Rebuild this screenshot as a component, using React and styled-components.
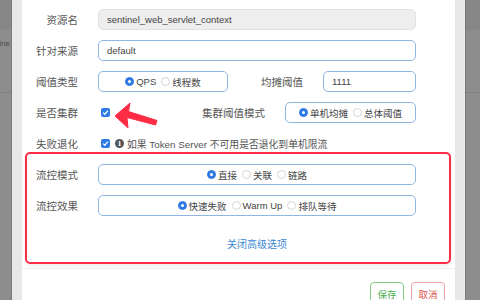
import React from 'react';
import styled, { createGlobalStyle } from 'styled-components';

const Global = createGlobalStyle`
  html, body {
    margin: 0;
    padding: 0;
    width: 480px;
    height: 300px;
    overflow: hidden;
    background: #8d8d8d;
  }
  * { box-sizing: border-box; }
`;

const Page = styled.div`
  display: flex;
  width: 480px;
  height: 300px;
  font-family: "Liberation Sans", "Noto Sans CJK SC", sans-serif;
`;

const Backdrop = styled.div`
  width: ${(p) => p.$w}px;
  flex-shrink: 0;
  height: 100%;
  background: #8d8d8d;
  display: flex;
  flex-direction: column;
  overflow: hidden;
  border-${(p) => p.$side}: 1px solid #7a7a7a;
`;

const BackdropHead = styled.div`
  height: 30px;
  background: #878787;
`;

const BackdropRow = styled.div`
  height: 63px;
  border-bottom: 1px solid #808080;
  font-size: 8px;
  color: #4a4a4a;
  padding-top: 9px;
  white-space: nowrap;
  text-indent: ${(p) => p.$indent}px;
`;

const Frame = styled.div`
  flex: 1;
  display: flex;
  background: #e8e8e8;
  padding: 0 ${(p) => p.$right}px 0 10px;
`;

const Modal = styled.div`
  position: relative;
  flex: 1;
  background: #fff;
  display: flex;
  flex-direction: column;
`;

const Body = styled.div`
  padding: 9px 39px 0 0;
  display: flex;
  flex-direction: column;
  gap: 10px;
`;

const Row = styled.div`
  display: flex;
  align-items: center;
  height: 21px;
`;

const Label = styled.div`
  width: ${(p) => p.$w || 56}px;
  flex-shrink: 0;
  text-align: right;
  font-size: 10.5px;
  color: #555;
  font-family: "Noto Sans CJK SC", sans-serif;
  margin-right: 20px;
  margin-left: ${(p) => (p.$auto ? 'auto' : '0')};
`;

const Control = styled.div`
  flex: 1;
  display: flex;
  align-items: center;
  height: 100%;
`;

const Input = styled.div`
  width: ${(p) => (p.$w ? `${p.$w}px` : '100%')};
  height: 21px;
  border: 1px solid ${(p) => (p.$disabled ? '#e2e2e2' : '#8fb7e2')};
  background: ${(p) => (p.$disabled ? '#eeeeee' : '#fff')};
  border-radius: 5px;
  padding: 0 8px;
  display: flex;
  align-items: center;
  font-size: 9.5px;
  color: #444;
`;

const RadioBox = styled.div`
  width: ${(p) => (p.$w ? `${p.$w}px` : '100%')};
  height: 21px;
  border: 1px solid #8fb7e2;
  border-radius: 5px;
  display: flex;
  align-items: center;
  justify-content: center;
  gap: 5px;
`;

const RadioItem = styled.span`
  display: inline-flex;
  align-items: center;
  gap: 2px;
  font-size: 9.5px;
  color: #444;
  font-family: "Liberation Sans", "Noto Sans CJK SC", sans-serif;
`;

const Dot = styled.span`
  width: 9px;
  height: 9px;
  border-radius: 50%;
  display: inline-flex;
  align-items: center;
  justify-content: center;
  background: ${(p) => (p.$on ? '#2f7be6' : '#fff')};
  border: 1px solid ${(p) => (p.$on ? '#2f7be6' : '#d4d4d4')};
  &::after {
    content: '';
    width: 3px;
    height: 3px;
    border-radius: 50%;
    background: ${(p) => (p.$on ? '#fff' : 'transparent')};
  }
`;

const Check = styled.span`
  width: 9px;
  height: 9px;
  margin-left: 3px;
  border-radius: 2px;
  background: #2f7be6;
  display: inline-flex;
  align-items: center;
  justify-content: center;
  flex-shrink: 0;
`;

const Info = styled.span`
  width: 9px;
  height: 9px;
  border-radius: 50%;
  background: #555;
  color: #fff;
  font-size: 7px;
  font-weight: bold;
  display: inline-flex;
  align-items: center;
  justify-content: center;
  margin: 0 3px 0 5px;
  font-family: "DejaVu Serif", serif;
`;

const Hint = styled.span`
  font-size: 9.8px;
  color: #555;
  font-family: "Liberation Sans", "Noto Sans CJK SC", sans-serif;
  white-space: nowrap;
`;

const Toggle = styled.div`
  margin-top: 21px;
  margin-right: 39px;
  padding-left: 76px;
  height: 14px;
  text-align: center;
  font-size: 10px;
  color: #3b87d4;
  font-family: "Noto Sans CJK SC", sans-serif;
  line-height: 14px;
`;

const Footer = styled.div`
  margin-top: 17px;
  border-top: 1px solid #eeeeee;
  padding: 13px 10px 0 0;
  display: flex;
  justify-content: flex-end;
  gap: 7px;
`;

const Button = styled.div`
  width: 34px;
  height: 24px;
  border-radius: 4px;
  border: 1px solid ${(p) => (p.$tone === 'ok' ? '#86cc86' : '#eca3a3')};
  color: ${(p) => (p.$tone === 'ok' ? '#4cae4c' : '#d9534f')};
  font-size: 9.5px;
  font-family: "Noto Sans CJK SC", sans-serif;
  display: flex;
  align-items: center;
  justify-content: center;
`;

const Highlight = styled.div`
  position: absolute;
  left: 3px;
  top: 152px;
  width: 426px;
  height: 112px;
  border: 2.5px solid #ff2c46;
  border-radius: 5px;
  box-shadow: 0 2px 4px rgba(0, 0, 0, 0.08);
  pointer-events: none;
`;

const Arrow = styled.svg`
  position: absolute;
  left: 91px;
  top: 102px;
`;

const Radio = ({ on, children }) => (
  <RadioItem>
    <Dot $on={on} />
    {children}
  </RadioItem>
);

const Tick = () => (
  <svg width="7" height="7" viewBox="0 0 8 8">
    <path d="M1.3 4.2 L3.2 6 L6.8 1.8" fill="none" stroke="#fff" strokeWidth="1.4" />
  </svg>
);

export default function App() {
  return (
    <>
      <Global />
      <Page>
        <Backdrop $w={12} $side="right">
          <BackdropHead />
          <BackdropRow $indent={-3}>tine</BackdropRow>
        </Backdrop>
        <Frame $right={10}>
          <Modal>
            <Body>
              <Row>
                <Label>资源名</Label>
                <Control>
                  <Input $disabled>sentinel_web_servlet_context</Input>
                </Control>
              </Row>
              <Row>
                <Label>针对来源</Label>
                <Control>
                  <Input>default</Input>
                </Control>
              </Row>
              <Row>
                <Label>阈值类型</Label>
                <Control>
                  <RadioBox $w={130}>
                    <Radio on>QPS</Radio>
                    <Radio>线程数</Radio>
                  </RadioBox>
                  <Label $auto $w={60}>均摊阈值</Label>
                  <Input $w={93}>1111</Input>
                </Control>
              </Row>
              <Row>
                <Label>是否集群</Label>
                <Control>
                  <Check><Tick /></Check>
                  <Label $auto $w={70}>集群阈值模式</Label>
                  <RadioBox $w={131}>
                    <Radio on>单机均摊</Radio>
                    <Radio>总体阈值</Radio>
                  </RadioBox>
                </Control>
              </Row>
              <Row>
                <Label>失败退化</Label>
                <Control>
                  <Check><Tick /></Check>
                  <Info>i</Info>
                  <Hint>如果 Token Server 不可用是否退化到单机限流</Hint>
                </Control>
              </Row>
              <Row>
                <Label>流控模式</Label>
                <Control>
                  <RadioBox>
                    <Radio on>直接</Radio>
                    <Radio>关联</Radio>
                    <Radio>链路</Radio>
                  </RadioBox>
                </Control>
              </Row>
              <Row>
                <Label>流控效果</Label>
                <Control>
                  <RadioBox>
                    <Radio on>快速失败</Radio>
                    <Radio>Warm Up</Radio>
                    <Radio>排队等待</Radio>
                  </RadioBox>
                </Control>
              </Row>
            </Body>
            <Toggle>关闭高级选项</Toggle>
            <Footer>
              <Button $tone="ok">保存</Button>
              <Button $tone="cancel">取消</Button>
            </Footer>
            <Highlight />
            <Arrow width="46" height="28" viewBox="0 0 46 28">
              <path
                d="M2 14 L17 1 L15.5 9.5 L44 18.5 L42.5 23 L14 15.5 L15 26 Z"
                fill="#ff2c46"
                strokeLinejoin="round"
                stroke="#ff2c46"
                strokeWidth="1"
              />
            </Arrow>
          </Modal>
        </Frame>
        <Backdrop $w={15} $side="left">
          <BackdropHead />
          <BackdropRow $indent={0} />
        </Backdrop>
      </Page>
    </>
  );
}
